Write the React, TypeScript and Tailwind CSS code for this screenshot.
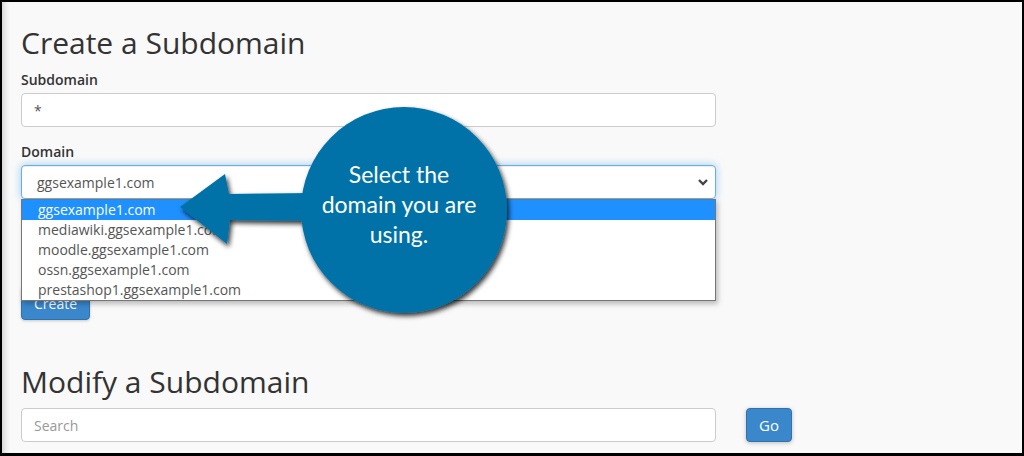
import React from "react";

const domains = [
  "ggsexample1.com",
  "mediawiki.ggsexample1.com",
  "moodle.ggsexample1.com",
  "ossn.ggsexample1.com",
  "prestashop1.ggsexample1.com",
];

function Callout() {
  // arrow + bubble drawn over the form
  return (
    <svg
      className="pointer-events-none absolute left-0 top-0 z-20"
      width="1024"
      height="456"
      viewBox="0 0 1024 456"
    >
      <defs>
        <filter id="calloutShadow" x="-20%" y="-20%" width="140%" height="140%">
          <feDropShadow dx="2" dy="3" stdDeviation="2.5" floodColor="#000" floodOpacity="0.8" />
        </filter>
      </defs>
      <g filter="url(#calloutShadow)" fill="#0472a8">
        <path d="M178 205 L223 172 L227 192 L310 191 L310 219 L228 218 L225 242 Z" />
        <circle cx="402" cy="208" r="103" />
      </g>
    </svg>
  );
}

export default function App() {
  return (
    <div
      className="relative h-[456px] w-[1024px] overflow-hidden border-t-2 border-b-[3px] border-l-2 border-r-2 border-black bg-[#f9f9f9] text-[#333] shadow-[inset_7px_0_6px_-5px_rgba(0,0,0,0.18)]"
      style={{ fontFamily: '"Open Sans", "Noto Sans", sans-serif' }}
    >
      <div className="flex flex-col pl-[19px] pt-[24px]">
        <h1 className="text-[30px] font-normal leading-[33px]">Create a Subdomain</h1>

        <label className="mt-[11px] text-[14px] font-semibold leading-5">Subdomain</label>
        <div className="mt-[3px] flex h-[34px] w-[695px] items-center rounded border border-[#ccc] bg-white pl-3 text-[14px] text-[#555]">
          *
        </div>

        <label className="mt-[15px] text-[14px] font-semibold leading-5">Domain</label>
        <div className="relative mt-[3px] w-[695px]">
          <div className="flex h-[34px] items-center justify-between rounded border border-[#66afe9] bg-white pl-[15px] pr-[6px] text-[14px] text-[#555] shadow-[inset_0_1px_1px_rgba(0,0,0,0.075),0_0_8px_rgba(102,175,233,0.6)]">
            <span>ggsexample1.com</span>
            <svg width="12" height="8" viewBox="0 0 12 8">
              <path d="M2 2 L6 6 L10 2" fill="none" stroke="#444" strokeWidth="2.4" />
            </svg>
          </div>
          <ul className="absolute left-0 top-full z-10 w-full border border-[#767676] bg-white text-[14px] leading-5 text-[#555] shadow-[2px_3px_5px_rgba(0,0,0,0.25)]">
            {domains.map((d, i) => (
              <li
                key={d}
                className={i === 0 ? "h-5 bg-[#1e90ff] pl-4 text-white" : "h-5 pl-4"}
              >
                {d}
              </li>
            ))}
          </ul>
        </div>

        <div className="mt-[87px]">
          <button className="h-[34px] rounded border border-[#2f72ad] bg-[#3a87cc] px-3 text-[14px] text-white shadow-[0_1px_3px_rgba(0,0,0,0.2)]">
            Create
          </button>
        </div>

        <h2 className="mt-[45px] text-[30px] font-normal leading-[33px]">Modify a Subdomain</h2>

        <div className="mt-[10px] flex items-center gap-[30px]">
          <div className="flex h-[34px] w-[695px] items-center rounded border border-[#ccc] bg-white pl-3 text-[14px] text-[#999]">
            Search
          </div>
          <button className="h-[34px] rounded border border-[#2f72ad] bg-[#3a87cc] px-3 text-[15px] text-white shadow-[0_1px_4px_rgba(0,0,0,0.25)]">
            Go
          </button>
        </div>
      </div>

      <Callout />

      <div
        className="pointer-events-none absolute left-[294px] top-[157px] z-30 flex w-[206px] flex-col items-center text-[23px] leading-[30px] text-white"
        style={{ fontFamily: 'Lato, "Open Sans", sans-serif' }}
      >
        <span>Select the</span>
        <span>domain you are</span>
        <span>using.</span>
      </div>
    </div>
  );
}
